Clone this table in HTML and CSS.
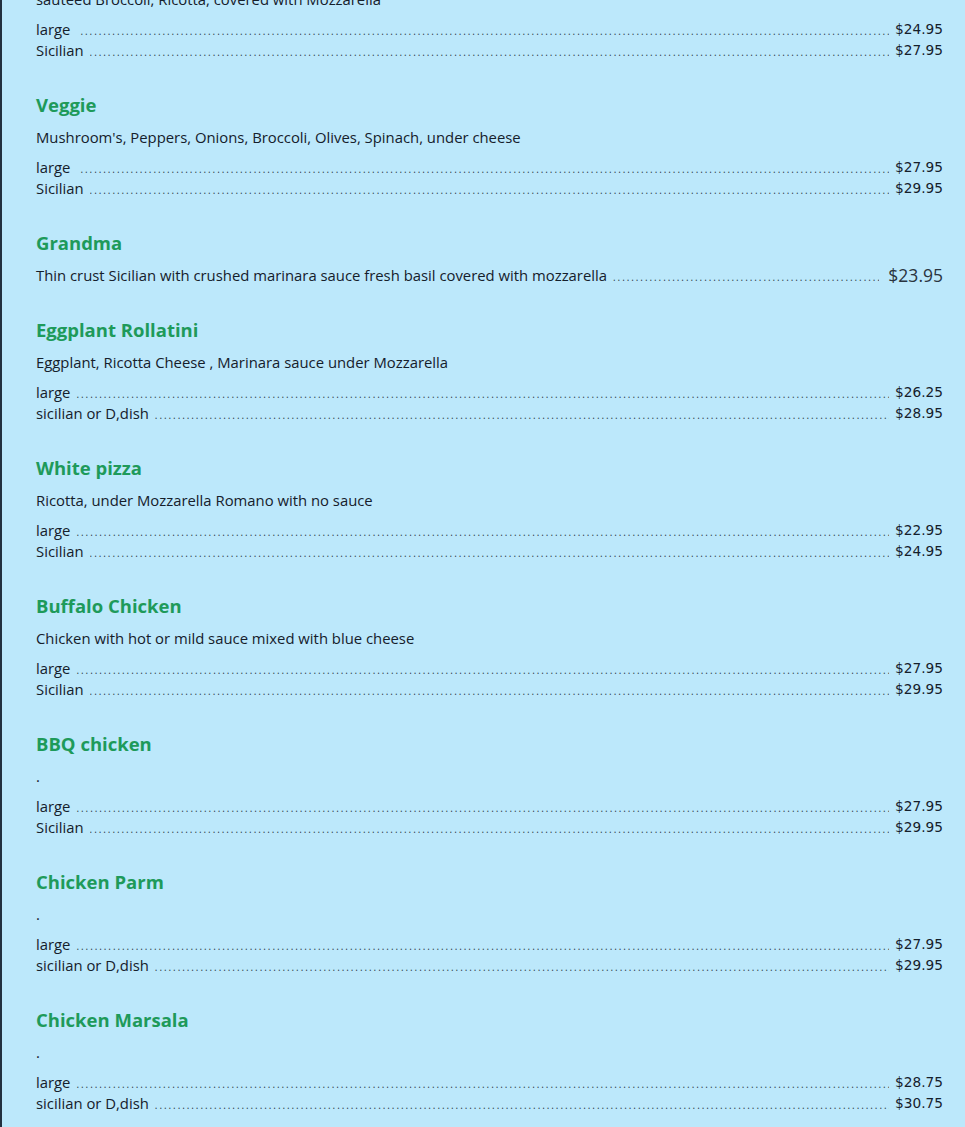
FILE: index.html
```html
<!DOCTYPE html>
<html lang="en">
<head>
  <meta charset="UTF-8" />
  <title>Pizza Menu</title>
  <link rel="stylesheet" href="styles.css">
</head>
<body>
  <main class="menu">
    <section class="pie pie--cut">
      <p class="pie__desc">sauteed Broccoli, Ricotta, covered with Mozzarella</p>
      <div class="price-list">
        <div class="row row--wide"><span class="row__name">large</span><span class="row__dots"></span><span class="row__price">$24.95</span></div>
        <div class="row"><span class="row__name">Sicilian</span><span class="row__dots"></span><span class="row__price">$27.95</span></div>
      </div>
    </section>

    <section class="pie">
      <h2 class="pie__title">Veggie</h2>
      <p class="pie__desc">Mushroom's, Peppers, Onions, Broccoli, Olives, Spinach, under cheese</p>
      <div class="price-list">
        <div class="row row--wide"><span class="row__name">large</span><span class="row__dots"></span><span class="row__price">$27.95</span></div>
        <div class="row"><span class="row__name">Sicilian</span><span class="row__dots"></span><span class="row__price">$29.95</span></div>
      </div>
    </section>

    <section class="pie">
      <h2 class="pie__title">Grandma</h2>
      <div class="row row--single">
        <span class="row__name">Thin crust Sicilian with crushed marinara sauce fresh basil covered with mozzarella</span><span class="row__dots"></span><span class="row__price row__price--big">$23.95</span>
      </div>
    </section>

    <section class="pie">
      <h2 class="pie__title">Eggplant Rollatini</h2>
      <p class="pie__desc">Eggplant, Ricotta Cheese , Marinara sauce under Mozzarella</p>
      <div class="price-list">
        <div class="row"><span class="row__name">large</span><span class="row__dots"></span><span class="row__price">$26.25</span></div>
        <div class="row"><span class="row__name">sicilian or D,dish</span><span class="row__dots"></span><span class="row__price">$28.95</span></div>
      </div>
    </section>

    <section class="pie">
      <h2 class="pie__title">White pizza</h2>
      <p class="pie__desc">Ricotta, under Mozzarella Romano with no sauce</p>
      <div class="price-list">
        <div class="row"><span class="row__name">large</span><span class="row__dots"></span><span class="row__price">$22.95</span></div>
        <div class="row"><span class="row__name">Sicilian</span><span class="row__dots"></span><span class="row__price">$24.95</span></div>
      </div>
    </section>

    <section class="pie">
      <h2 class="pie__title">Buffalo Chicken</h2>
      <p class="pie__desc">Chicken with hot or mild sauce mixed with blue cheese</p>
      <div class="price-list">
        <div class="row"><span class="row__name">large</span><span class="row__dots"></span><span class="row__price">$27.95</span></div>
        <div class="row"><span class="row__name">Sicilian</span><span class="row__dots"></span><span class="row__price">$29.95</span></div>
      </div>
    </section>

    <section class="pie">
      <h2 class="pie__title">BBQ chicken</h2>
      <p class="pie__desc">.</p>
      <div class="price-list">
        <div class="row"><span class="row__name">large</span><span class="row__dots"></span><span class="row__price">$27.95</span></div>
        <div class="row"><span class="row__name">Sicilian</span><span class="row__dots"></span><span class="row__price">$29.95</span></div>
      </div>
    </section>

    <section class="pie">
      <h2 class="pie__title">Chicken Parm</h2>
      <p class="pie__desc">.</p>
      <div class="price-list">
        <div class="row"><span class="row__name">large</span><span class="row__dots"></span><span class="row__price">$27.95</span></div>
        <div class="row"><span class="row__name">sicilian or D,dish</span><span class="row__dots"></span><span class="row__price">$29.95</span></div>
      </div>
    </section>

    <section class="pie">
      <h2 class="pie__title">Chicken Marsala</h2>
      <p class="pie__desc">.</p>
      <div class="price-list">
        <div class="row"><span class="row__name">large</span><span class="row__dots"></span><span class="row__price">$28.75</span></div>
        <div class="row"><span class="row__name">sicilian or D,dish</span><span class="row__dots"></span><span class="row__price">$30.75</span></div>
      </div>
    </section>
  </main>
</body>
</html>
```

FILE: styles.css
```css
html, body {
  height: 100%;
}

body {
  margin: 0;
  background-color: #BCE8FB;
  color: #15202b;
  font-family: 'Open Sans', 'Liberation Sans', sans-serif;
  font-size: 14.85px;
  overflow: hidden;
}

.menu {
  border-left: 2px solid #22303f;
  min-height: 100%;
  padding: 0 22px 0 34px;
}

.pie {
  padding-bottom: 31px;
}

/* page is scrolled, first item is cut at the top */
.pie--cut {
  margin-top: -29px;
}

.pie__title {
  margin: 0;
  font-size: 18.5px;
  line-height: 26px;
  font-weight: 700;
  color: #1e9a5a;
}

.pie__desc {
  margin: 9px 0 0;
  line-height: 21px;
}

.pie--cut .pie__desc {
  margin-top: 0;
  padding-top: 18px;
}

.price-list {
  margin-top: 9px;
}

.row {
  display: flex;
  align-items: stretch;
  height: 21px;
  line-height: 21px;
}

.row--single {
  margin-top: 9px;
}

.row__name {
  white-space: nowrap;
}

/* точки-отточие между названием и ценой */
.row__dots {
  flex: 1;
  height: 21px;
  box-sizing: border-box;
  padding-top: 2px;
  margin: 0 6px;
  overflow: hidden;
  white-space: nowrap;
  font-size: 10px;
  line-height: 21px;
  letter-spacing: 1.93px;
  color: #2e3c48;
}

.row__dots::before {
  content: "........................................................................................................................................................................................................................................";
}

.row--wide .row__dots {
  margin-left: 10px;
}

.row--single .row__dots {
  margin-right: 9px;
}

.row__price {
  font-family: 'DejaVu Sans', Verdana, sans-serif;
  font-size: 13.7px;
  color: #15202b;
}

.row__price--big {
  font-family: 'Open Sans', sans-serif;
  font-size: 17.5px;
  color: #2a3440;
}
```
